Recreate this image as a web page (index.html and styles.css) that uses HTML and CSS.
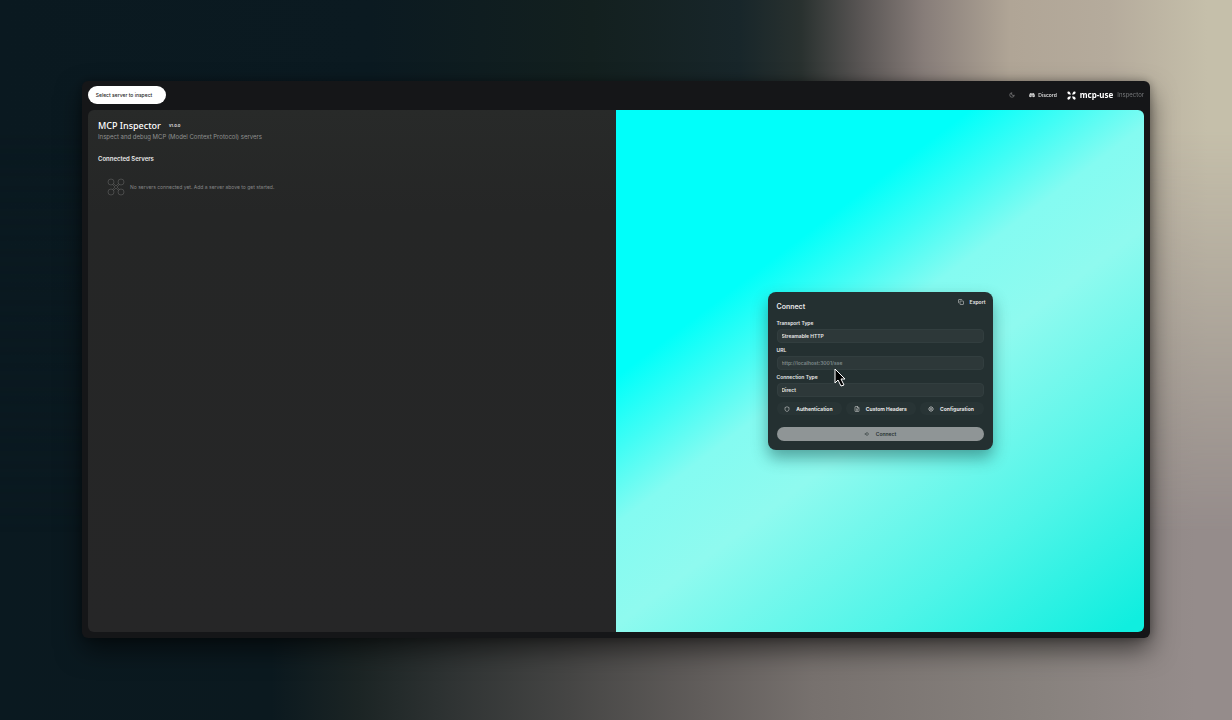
FILE: index.html
```html
<!DOCTYPE html>
<html lang="en">
<head>
    <meta charset="UTF-8">
    <meta name="viewport" content="width=device-width, initial-scale=1.0">
    <title>MCP Inspector</title>
    <link rel="stylesheet" href="styles.css">
</head>
<body>
    <div class="window">
        <header class="topbar">
            <button class="server-select">Select server to inspect</button>
            <nav class="topbar-links">
                <button class="icon-button" aria-label="Toggle theme">
                    <svg class="icon" viewBox="0 0 24 24"><path d="M12 3a6 6 0 0 0 9 9 9 9 0 1 1-9-9z"/></svg>
                </button>
                <a class="discord" href="#">
                    <svg class="icon discord-icon" viewBox="0 0 24 24"><path fill-rule="evenodd" d="M8.500 4 9 5.500h6l.5-1.500c2 .3 3.500.8 5 1.800 2 3.700 3 7.700 2.700 12.200-1.700 1.300-3.500 2-5.400 2.500L16.500 18h-9l-1.300 2.500C4.300 20 2.500 19.300.8 18 .5 13.500 1.500 9.500 3.500 5.800 5 4.800 6.500 4.300 8.500 4zM8.200 10a2.200 2.500 0 1 0 0 5 2.200 2.500 0 0 0 0-5zm7.600 0a2.200 2.500 0 1 0 0 5 2.200 2.500 0 0 0 0-5z"/></svg>
                    Discord
                </a>
                <a class="brand" href="#">
                    <svg class="brand-icon" viewBox="0 0 24 24">
                        <path d="M10 10C6 10 1 8 1 4c0-2 1-3 3-3 4 0 6 5 6 9zM14 10c4 0 9-2 9-6 0-2-1-3-3-3-4 0-6 5-6 9zM10 14c-4 0-9 2-9 6 0 2 1 3 3 3 4 0 6-5 6-9zM14 14c4 0 9 2 9 6 0 2-1 3-3 3-4 0-6-5-6-9z"/>
                    </svg>
                    <span class="brand-name">mcp-use</span>
                    <span class="brand-sub">Inspector</span>
                </a>
            </nav>
        </header>

        <main class="panels">
            <section class="servers">
                <div class="title-row">
                    <h1>MCP Inspector</h1>
                    <span class="version">v1.0.0</span>
                </div>
                <p class="subtitle">Inspect and debug MCP (Model Context Protocol) servers</p>
                <h2>Connected Servers</h2>
                <div class="empty">
                    <svg class="empty-icon" viewBox="0 0 36 36">
                        <circle cx="8" cy="8" r="6"/><circle cx="28" cy="8" r="6"/>
                        <circle cx="8" cy="28" r="6"/><circle cx="28" cy="28" r="6"/>
                        <path d="M11 13l5 5-5 5M13 11l5 5 5-5M25 13l-5 5 5 5M13 25l5-5 5 5"/>
                    </svg>
                    <p>No servers connected yet. Add a server above to get started.</p>
                </div>
            </section>

            <section class="stage">
                <form class="card">
                    <div class="card-head">
                        <h3>Connect</h3>
                        <button type="button" class="export">
                            <svg class="icon" viewBox="0 0 24 24"><rect x="8" y="8" width="14" height="14" rx="2"/><path d="M4 16c-1.100 0-2-.9-2-2V4c0-1.100.9-2 2-2h10c1.100 0 2 .9 2 2"/></svg>
                            Export
                        </button>
                    </div>

                    <label for="transport">Transport Type</label>
                    <select id="transport" class="field">
                        <option>Streamable HTTP</option>
                    </select>

                    <label for="url">URL</label>
                    <input id="url" class="field" type="text" placeholder="http://localhost:3001/sse">

                    <label for="connection">Connection Type</label>
                    <select id="connection" class="field">
                        <option>Direct</option>
                    </select>

                    <div class="options">
                        <button type="button" class="option">
                            <svg class="icon" viewBox="0 0 24 24"><path d="M20 13c0 5-3.500 7.500-8 9-4.500-1.500-8-4-8-9V6c3 0 6-1.500 8-4 2 2.500 5 4 8 4z"/></svg>
                            Authentication
                        </button>
                        <button type="button" class="option">
                            <svg class="icon" viewBox="0 0 24 24"><path d="M15 2H6a2 2 0 0 0-2 2v16a2 2 0 0 0 2 2h12a2 2 0 0 0 2-2V7zM14 2v6h6M8 13h8M8 17h8M8 9h2"/></svg>
                            Custom Headers
                        </button>
                        <button type="button" class="option">
                            <svg class="icon" viewBox="0 0 24 24"><circle cx="12" cy="12" r="3"/><circle cx="12" cy="12" r="8"/><path d="M12 1v3M12 20v3M1 12h3M20 12h3M4 4l2 2M18 18l2 2M4 20l2-2M18 6l2-2"/></svg>
                            Configuration
                        </button>
                    </div>

                    <button type="button" class="connect">
                        <svg class="icon" viewBox="0 0 24 24"><path d="M12 5l7 7-7 7-7-7zM2 12h8M12 9v6"/></svg>
                        Connect
                    </button>

                    <svg class="cursor" viewBox="0 0 12 19"><path d="M1 1v14l3-3 3 6 3-1-3-6h4z"/></svg>
                </form>
            </section>
        </main>
    </div>
</body>
</html>
```
FILE: styles.css
```css
* {
    box-sizing: border-box;
}

body {
    margin: 0;
    min-height: 100vh;
    padding: 81px 82px 82px;
    display: flex;
    font-family: Inter, "Liberation Sans", sans-serif;
    font-size: 6px;
    line-height: 8px;
    color: #e8e8e8;
    background: linear-gradient(90deg, #0a1920 0%, #0b191f 22%, #1b2424 29%, #303434 37%, #454544 46%, #615d5b 57%, #77716e 66%, #88827e 85%, #958c8b 97%);
}

/* warm light in the top right corner, fades into the body gradient */
body::before {
    content: "";
    position: fixed;
    inset: 0;
    z-index: -1;
    background: linear-gradient(90deg, #0a1920 0%, #0b1a21 30%, #13201f 48%, #18262a 60%, #29312f 65%, #5a5655 70%, #877d79 75%, #b0a596 82%, #b5ab9c 90%, #c5bfaa 98%);
    mask-image: linear-gradient(#000 18%, transparent 74%);
}

button, input, select {
    font: inherit;
    color: inherit;
    border: none;
    margin: 0;
    padding: 0;
    background: none;
}

h1, h2, h3, p {
    margin: 0;
}

button {
    display: flex;
    align-items: center;
    justify-content: center;
    cursor: pointer;
}

a {
    color: inherit;
    text-decoration: none;
}

.icon {
    width: 6px;
    height: 6px;
    fill: none;
    stroke: currentColor;
    stroke-width: 2;
    flex: none;
}

.window {
    flex: 1;
    display: flex;
    flex-direction: column;
    padding: 0 6px 6px;
    border-radius: 6px;
    background: #151618;
    box-shadow: 0 12px 26px rgba(0, 0, 0, 0.55), 0 0 10px rgba(0, 0, 0, 0.3);
}

.topbar {
    height: 29px;
    padding-bottom: 1px;
    display: flex;
    align-items: center;
    justify-content: space-between;
}

.server-select {
    height: 18px;
    width: 78px;
    padding-right: 6px;
    border-radius: 9px;
    background: #fff;
    color: #222;
    font-size: 5px;
    font-weight: 500;
}

.topbar-links, .discord, .brand {
    display: flex;
    align-items: center;
}

.topbar-links {
    gap: 10px;
}

.icon-button {
    margin-right: 4px;
    color: #aaa;
}

.discord {
    gap: 3px;
    font-size: 5px;
    font-weight: 500;
}

.discord-icon {
    fill: currentColor;
    stroke: none;
}

.brand {
    gap: 4px;
}

.brand-icon {
    width: 9px;
    height: 9px;
    fill: #fff;
}

.brand-name {
    font-family: "Noto Sans", sans-serif;
    font-size: 8px;
    font-weight: 700;
    color: #fff;
}

.brand-sub {
    color: #77797b;
}

.panels {
    flex: 1;
    display: grid;
    grid-template-columns: 1fr 1fr;
    border-radius: 6px;
    overflow: hidden;
}

.servers {
    padding: 10px;
    background: linear-gradient(#282a29, #252626 20%, #262627);
}

.title-row {
    display: flex;
    align-items: center;
    gap: 8px;
    height: 12px;
}

h1 {
    font-family: "Noto Sans", sans-serif;
    font-size: 9px;
    line-height: 12px;
    font-weight: 500;
    color: #fff;
}

.version {
    font-size: 4px;
    font-weight: 600;
}

.subtitle {
    margin-top: 1px;
    color: #8f9190;
}

h2 {
    margin-top: 14px;
    font-size: 6px;
    font-weight: 600;
}

.empty {
    display: flex;
    align-items: center;
    gap: 5px;
    margin-top: 15px;
    padding-left: 9px;
    font-size: 5px;
    color: #858686;
}

.empty-icon {
    width: 18px;
    height: 18px;
    fill: none;
    stroke: #6c6d6d;
    stroke-width: 1;
}

.stage {
    display: grid;
    place-items: center;
    background: linear-gradient(143deg, #00fffa 0%, #00fffa 29%, #40fdf5 37%, #84fbf1 45%, #8ffaef 56%, #50f5e8 78%, #10eedf 98%);
}

.card {
    position: relative;
    width: 225px;
    padding: 9px;
    display: flex;
    flex-direction: column;
    border-radius: 8px;
    background: #243031;
    box-shadow: 0 8px 16px rgba(10, 60, 60, 0.45);
}

.card-head {
    display: flex;
    align-items: flex-start;
    justify-content: space-between;
    height: 18px;
}

h3 {
    padding-top: 2px;
    font-size: 7px;
    font-weight: 600;
}

.export {
    gap: 6px;
    height: 2px;
    margin-right: -2px;
    font-size: 5px;
    font-weight: 600;
}

label {
    height: 10px;
    font-size: 5px;
    font-weight: 600;
}

.field {
    appearance: none;
    height: 14px;
    margin-bottom: 3px;
    padding: 0 4px;
    border: 1px solid #323e3f;
    border-radius: 4px;
    background: #2d3839;
    font-size: 5px;
    font-weight: 600;
}

.field::placeholder {
    color: #7e898a;
}

.options {
    display: flex;
    gap: 4px;
    margin-top: 2px;
}

.option {
    flex: 1 1 auto;
    gap: 6px;
    height: 13px;
    padding-right: 2px;
    border-radius: 6px;
    background: #283435;
    font-size: 5px;
    font-weight: 700;
}

.connect {
    gap: 6px;
    height: 14px;
    margin-top: 12px;
    border-radius: 7px;
    background: #8f9596;
    color: #263031;
    font-size: 5px;
    font-weight: 600;
}

/* mouse pointer over the form */
.cursor {
    position: absolute;
    left: 66px;
    top: 76px;
    width: 12px;
    height: 19px;
    fill: #000;
    stroke: #fff;
    stroke-width: 1;
}
```
